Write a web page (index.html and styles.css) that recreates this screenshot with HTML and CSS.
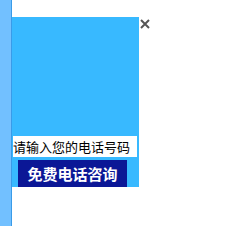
FILE: index.html
```html
<!DOCTYPE html>
<html lang="zh-CN">
<head>
  <meta charset="UTF-8">
  <title>免费电话咨询</title>
  <link rel="stylesheet" href="styles.css">
</head>
<body>
  <div class="page">
    <div class="side-bar"></div>
    <div class="float-area">
      <div class="call-box">
        <input class="phone-input" type="text" placeholder="请输入您的电话号码">
        <button class="call-btn">免费电话咨询</button>
      </div>
      <a class="close-btn" href="#">
        <svg width="10" height="10" viewBox="0 0 10 10">
          <path d="M1 1 L9 9 M9 1 L1 9" stroke="#555" stroke-width="2" />
        </svg>
      </a>
    </div>
  </div>
</body>
</html>
```

FILE: styles.css
```css
html, body {
  margin: 0;
  padding: 0;
  height: 100%;
  background: #fff;
  font-family: "Noto Sans CJK SC", "Liberation Sans", sans-serif;
}

.page {
  display: flex;
  height: 100%;
}

.side-bar {
  width: 11px;
  background-color: #72c0ff;
  border-right: 1px solid #3a9be8;
}

.float-area {
  position: relative;
  padding-top: 17px;
}

.call-box {
  width: 127px;
  height: 170px;
  background-color: #38b9ff;
  display: flex;
  flex-direction: column;
  align-items: flex-start;
}

.phone-input {
  margin: 119px 0 0 1px;
  width: 124px;
  height: 21px;
  padding: 0;
  border: none;
  outline: none;
  background: #fff;
  font-family: "Noto Sans CJK SC", sans-serif;
  font-size: 13px;
  color: #000;
}

.phone-input::placeholder {
  color: #000;
  opacity: 1;
}

.call-btn {
  margin: 3px 0 0 6px;
  width: 109px;
  height: 28px;
  padding: 0;
  border: none;
  background-color: #0b1796;
  color: #fff;
  font-family: "Noto Sans CJK SC", sans-serif;
  font-size: 15px;
  font-weight: bold;
  cursor: pointer;
}

.close-btn {
  position: absolute;
  top: 19px;
  left: 128px;
  width: 10px;
  height: 10px;
  line-height: 0;
}
```
